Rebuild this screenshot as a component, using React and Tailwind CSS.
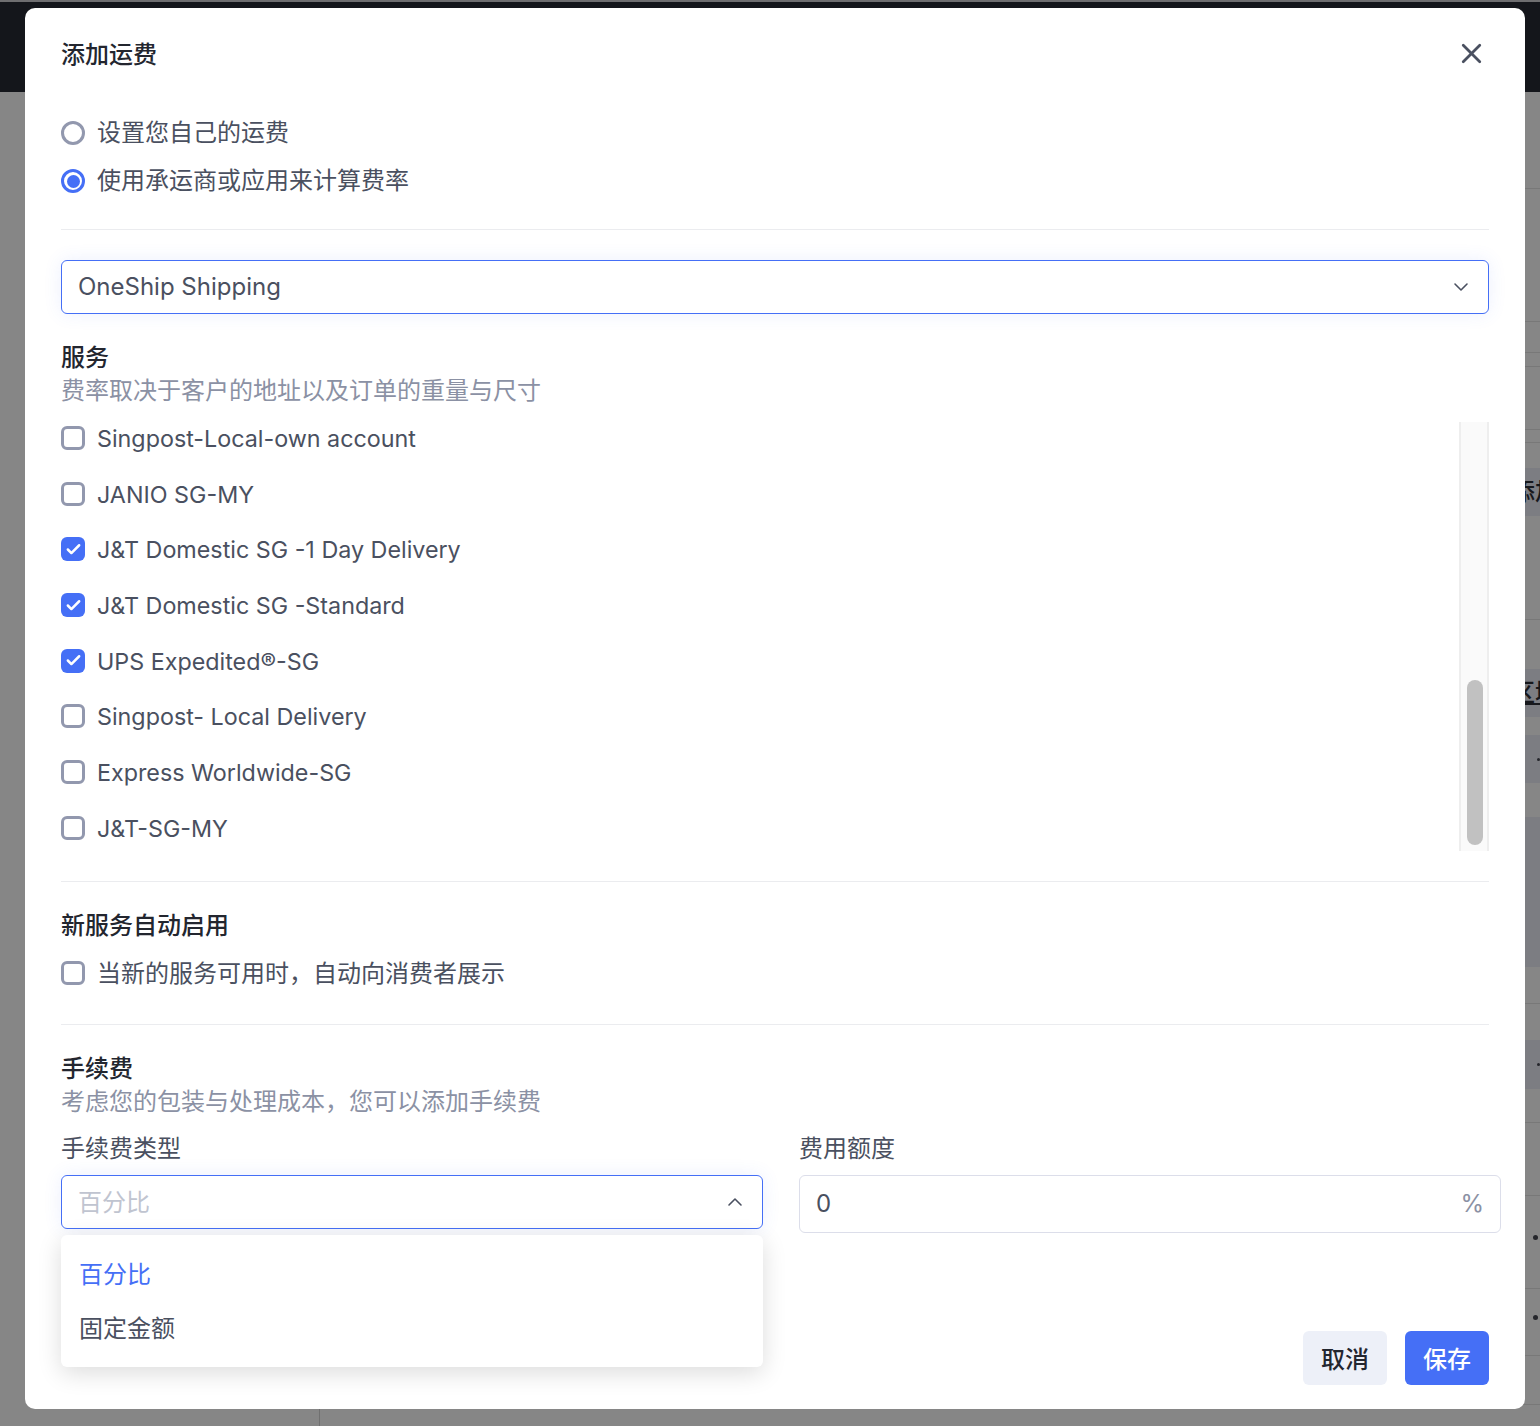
import { Check, ChevronDown, ChevronUp, X } from "lucide-react";

const services = [
  { name: "Singpost-Local-own account", checked: false },
  { name: "JANIO SG-MY", checked: false },
  { name: "J&T Domestic SG -1 Day Delivery", checked: true },
  { name: "J&T Domestic SG -Standard", checked: true },
  { name: "UPS Expedited®-SG", checked: true },
  { name: "Singpost- Local Delivery", checked: false },
  { name: "Express Worldwide-SG", checked: false },
  { name: "J&T-SG-MY", checked: false },
];

// what shows of the page behind the dialog, in the strip on the right
const backRows = [
  { h: "h-[97px]", line: true },
  { h: "h-[133px]", line: true },
  { h: "h-[31px]", line: true },
  { h: "h-[14px]", line: true },
  { h: "h-[63px]", line: true },
  { h: "h-[13px]", line: true },
  { h: "h-[25px]" },
  { h: "h-[48px]", band: true, text: "添加" },
  { h: "h-[104px]", line: true },
  { h: "h-[49px]" },
  { h: "h-[48px]", band: true, text: "区域", underline: true },
  { h: "h-[18px]" },
  { h: "h-[48px]", band: true, dot: "small" },
  { h: "h-[34px]" },
  { h: "h-[150px]", band: true },
  { h: "h-[37px]", line: true },
  { h: "h-[36px]" },
  { h: "h-[49px]", band: true, dot: "small" },
  { h: "h-[34px]", line: true },
  { h: "h-[73px]", line: true },
  { h: "h-[93px]", line: true, dot: "big" },
  { h: "h-[67px]", line: true, dot: "big" },
  { h: "h-[49px]", line: true },
  { h: "h-[21px]" },
];

function CheckBox({ checked }) {
  if (checked) {
    return (
      <span className="flex size-6 shrink-0 items-center justify-center rounded-[6px] bg-[#456ff6]">
        <Check className="size-[17px] text-white" strokeWidth={3.5} />
      </span>
    );
  }
  return <span className="size-6 shrink-0 rounded-[6px] border-[3px] border-[#9298ae] bg-white" />;
}

function Radio({ checked }) {
  if (checked) {
    return (
      <span className="mt-[2px] flex size-6 shrink-0 items-center justify-center rounded-full border-[3px] border-[#456ff6]">
        <span className="size-[13px] rounded-full bg-[#456ff6]" />
      </span>
    );
  }
  return <span className="mt-[2px] size-6 shrink-0 rounded-full border-[3px] border-[#9298ae]" />;
}

function BackPage() {
  return (
    <div className="flex h-[1426px] flex-col overflow-hidden bg-[#868686]">
      <div className="h-[92px] shrink-0 border-t-2 border-[#6e6e70] bg-[#14161b]" />
      <div className="flex flex-1">
        <div className="w-[320px] border-r border-[#707070]" />
        <div className="flex-1" />
        <div className="w-[40px] overflow-hidden">
          {backRows.map((row, i) => (
            <div
              key={i}
              className={`flex items-center whitespace-nowrap pl-[11px] ${row.h} ${row.band ? "bg-[#7c7d82]" : ""} ${row.line ? "border-b border-[#787878]" : ""}`}
            >
              {row.text && (
                <span className={`text-2xl font-medium text-[#17181c] ${row.underline ? "underline" : ""}`}>{row.text}</span>
              )}
              {row.dot === "small" && <span className="ml-[26px] size-[3px] rounded-full bg-[#25262b]" />}
              {row.dot === "big" && <span className="mb-[10px] ml-[22px] size-[5px] rounded-full bg-[#25262b]" />}
            </div>
          ))}
        </div>
      </div>
    </div>
  );
}

export default function App() {
  return (
    <div className="relative h-[1426px] overflow-hidden font-['Inter','Noto_Sans_CJK_SC',sans-serif] text-2xl leading-8 text-[#4a5060]">
      <BackPage />
      {/* Add shipping dialog */}
      <div className="absolute left-[25px] top-2 flex h-[1401px] w-[1500px] flex-col rounded-[10px] bg-white px-9 pt-[30px]">
        <div className="flex h-8 items-center justify-between">
          <h1 className="pt-px font-medium text-[#23262f]">添加运费</h1>
          <X className="mb-[2px] mr-px size-[33px] text-[#4a5060]" strokeWidth={2} />
        </div>

        <div className="mt-[46px] flex flex-col gap-4">
          <label className="flex h-8 items-center gap-3">
            <Radio />
            <span className="pt-px">设置您自己的运费</span>
          </label>
          <label className="flex h-8 items-center gap-3">
            <Radio checked />
            <span className="pt-px">使用承运商或应用来计算费率</span>
          </label>
        </div>

        <div className="mt-[33px] h-px shrink-0 bg-[#ebecef]" />

        <div className="mt-[30px] flex h-[54px] shrink-0 items-center justify-between rounded-[6px] border border-[#456ff6] bg-white pl-4 pr-[15px] shadow-[0_0_18px_rgba(69,111,246,0.1)]">
          <span>OneShip Shipping</span>
          <ChevronDown className="size-6 text-[#4a5060]" strokeWidth={1.6} />
        </div>

        <h2 className="mt-[27px] h-8 pt-px font-medium text-[#23262f]">服务</h2>
        <p className="mt-[2px] h-8 text-[#8b91a4]">费率取决于客户的地址以及订单的重量与尺寸</p>

        <div className="mt-[15px] flex h-[429px] shrink-0">
          <div className="flex flex-1 flex-col gap-[23.7px] overflow-hidden text-[23.3px]">
            {services.map((service) => (
              <label key={service.name} className="flex h-8 shrink-0 items-center gap-3">
                <CheckBox checked={service.checked} />
                <span className="pt-[2px]">{service.name}</span>
              </label>
            ))}
          </div>
          <div className="w-[30px] border-x-2 border-[#eeeeee] bg-[#fafafa] pl-[6px] pr-1 pt-[258px]">
            <div className="h-[165px] rounded-full bg-[#c1c1c1]" />
          </div>
        </div>

        <div className="mt-[30px] h-px shrink-0 bg-[#ebecef]" />

        <h2 className="mt-[27px] h-8 pt-px font-medium text-[#23262f]">新服务自动启用</h2>
        <label className="mt-4 flex h-8 items-center gap-3">
          <CheckBox />
          <span className="pt-px">当新的服务可用时，自动向消费者展示</span>
        </label>

        <div className="mt-[35px] h-px shrink-0 bg-[#ebecef]" />

        <h2 className="mt-[27px] h-8 pt-px font-medium text-[#23262f]">手续费</h2>
        <p className="mt-[2px] h-8 text-[#8b91a4]">考虑您的包装与处理成本，您可以添加手续费</p>

        <div className="mr-[-12px] mt-[15px] grid grid-cols-2 gap-x-9">
          <div className="relative">
            <div className="h-8">手续费类型</div>
            <div className="mt-[10px] flex h-[54px] items-center justify-between rounded-[6px] border border-[#456ff6] bg-white pl-4 pr-[15px] text-[#c0c4d0] shadow-[0_0_18px_rgba(69,111,246,0.1)]">
              <span className="pt-px">百分比</span>
              <ChevronUp className="size-6 text-[#4a5060]" strokeWidth={1.6} />
            </div>
            <div className="absolute inset-x-0 top-[102px] z-10 flex h-[132px] flex-col gap-[22px] rounded-[6px] bg-white px-[18px] pt-6 shadow-[0_6px_24px_rgba(0,0,0,0.14)]">
              <div className="text-[#456ff6]">百分比</div>
              <div>固定金额</div>
            </div>
          </div>
          <div>
            <div className="h-8">费用额度</div>
            <div className="mt-[10px] flex h-[58px] items-center justify-between rounded-[6px] border border-[#dcdeea] bg-white pl-4 pr-4">
              0
              <span className="text-[#8b91a4]">%</span>
            </div>
          </div>
        </div>

        <div className="mt-[98px] flex justify-end gap-[18px]">
          <button className="h-[54px] w-[84px] rounded-[6px] bg-[#edf0f8] pt-[3px] font-medium text-[#23262f]">取消</button>
          <button className="h-[54px] w-[84px] rounded-[6px] bg-[#456ff6] pt-[3px] font-medium text-white">保存</button>
        </div>
      </div>
    </div>
  );
}
